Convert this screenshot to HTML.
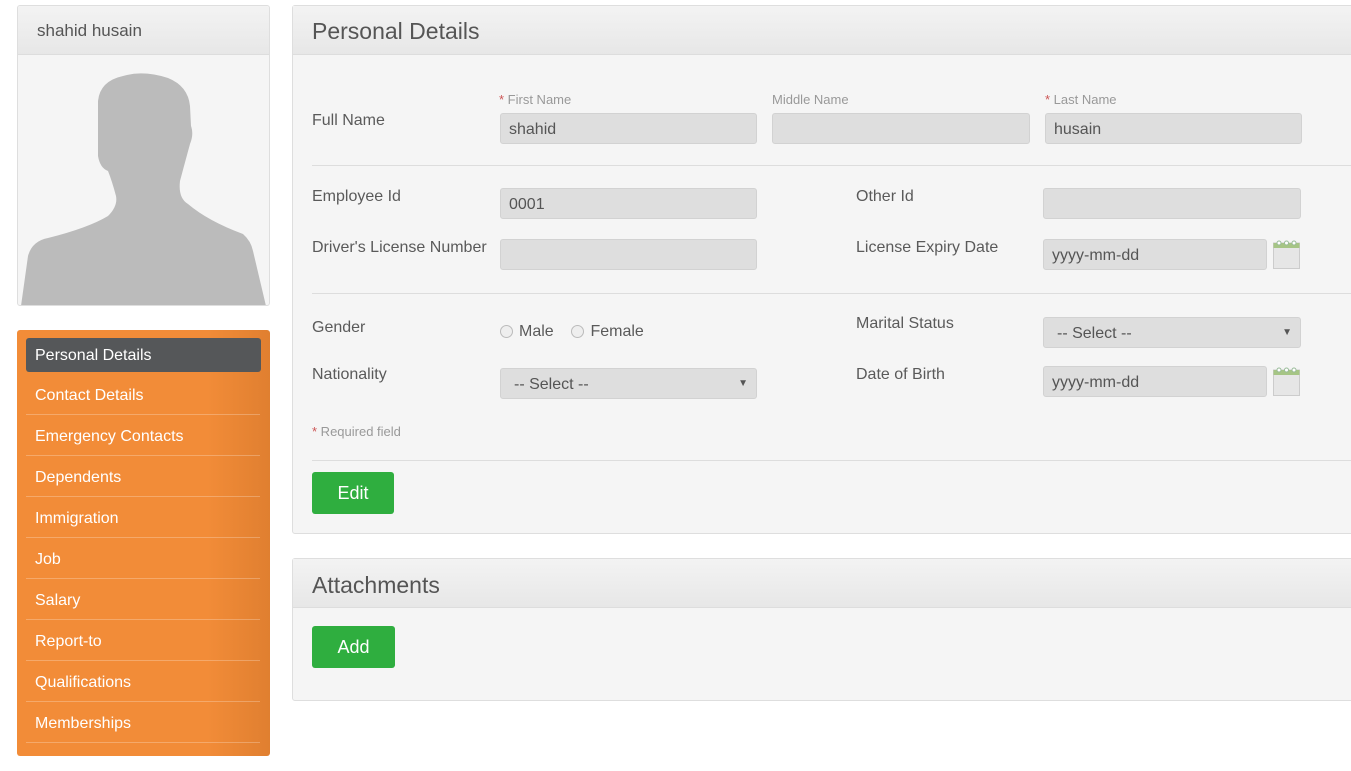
<!DOCTYPE html><html><head><style>
body{margin:0;width:1351px;height:771px;background:#fff;font-family:"Liberation Sans",sans-serif;position:relative;overflow:hidden;color:#5a5a5a}
.a{position:absolute}
.box{position:absolute;background:#f5f5f5;border:1px solid #dedede;border-radius:3px}
.hd{position:absolute;left:0;right:0;top:0;height:48px;background:linear-gradient(#f3f3f3,#e7e7e7);border-bottom:1px solid #ddd}
.in{position:absolute;background:#dedede;border:1px solid #d2d2d2;border-radius:3px;box-sizing:border-box;height:31px;font-size:16px;color:#555;padding:7px 8px}
.lb{position:absolute;font-size:16px;color:#5a5a5a}
.sm{position:absolute;font-size:13px;color:#999}
.hr{position:absolute;left:312px;right:0;height:1px;background:#ddd}
.btn{position:absolute;background:#2fae3f;color:#fff;font-size:18px;border-radius:3px;text-align:center;line-height:42px}
.menu div{position:absolute;left:26px;width:234px;height:40px;color:#fff;font-size:16px;line-height:42px;padding-left:9px;box-sizing:border-box;border-bottom:1px solid rgba(255,255,255,.25)}
.cal{position:absolute;width:27px;height:29px}
.rad{display:inline-block;width:13px;height:13px;border:1px solid #bbb;border-radius:50%;background:#eee;vertical-align:-2px;margin-right:6px;box-sizing:border-box}
.sel:after{content:"▼";position:absolute;right:8px;top:9px;font-size:10px;color:#555}
</style></head><body>
<div class="box" style="left:17px;top:5px;width:251px;height:299px;overflow:hidden">
<div class="hd"></div><div class="a" style="left:19px;top:15px;font-size:17px;color:#555">shahid husain</div>
<svg class="a" style="left:0;top:50px" width="251" height="250" viewBox="0 0 251 250"><path fill="#bbb" d="M3 250 L10 200 Q14 185 30 182 Q70 172 90 160 Q100 150 98 140 Q94 125 90 115 Q82 112 80 100 L80 45 Q82 25 105 20 Q125 14 150 22 Q170 30 172 50 L173 70 Q176 78 172 88 Q166 110 162 125 Q160 142 170 148 Q190 165 225 178 Q233 185 235 195 L248 250Z"/></svg>
</div>
<div class="a menu" style="left:17px;top:330px;width:253px;height:426px;border-radius:3px;background:linear-gradient(90deg,#f28c38 75%,#e07f30)">
<div style="left:9px;top:8px;height:34px;line-height:36px;background:#555759;border-radius:3px;border:none;width:235px">Personal Details</div>
<div style="left:9px;top:45px">Contact Details</div><div style="left:9px;top:86px">Emergency Contacts</div><div style="left:9px;top:127px">Dependents</div><div style="left:9px;top:168px">Immigration</div><div style="left:9px;top:209px">Job</div><div style="left:9px;top:250px">Salary</div><div style="left:9px;top:291px">Report-to</div><div style="left:9px;top:332px">Qualifications</div><div style="left:9px;top:373px">Memberships</div>
</div>
<div class="box" style="left:292px;top:5px;width:1070px;height:527px"><div class="hd"></div><div class="a" style="left:19px;top:12px;font-size:23px;color:#555">Personal Details</div></div>
<div class="box" style="left:292px;top:558px;width:1070px;height:141px"><div class="hd"></div><div class="a" style="left:19px;top:13px;font-size:23px;color:#555">Attachments</div></div>
<div class="lb" style="left:312px;top:112px">Full Name</div>
<div class="sm" style="left:499px;top:92px"><span style="color:#c55">*</span> First Name</div>
<div class="sm" style="left:772px;top:92px">Middle Name</div>
<div class="sm" style="left:1045px;top:92px"><span style="color:#c55">*</span> Last Name</div>
<div class="in" style="left:500px;top:113px;width:257px">shahid</div>
<div class="in" style="left:772px;top:113px;width:258px"></div>
<div class="in" style="left:1045px;top:113px;width:257px">husain</div>
<div class="hr" style="top:165px"></div>
<div class="lb" style="left:312px;top:188px">Employee Id</div>
<div class="in" style="left:500px;top:188px;width:257px">0001</div>
<div class="lb" style="left:856px;top:188px">Other Id</div>
<div class="in" style="left:1043px;top:188px;width:258px"></div>
<div class="lb" style="left:312px;top:239px">Driver's License Number</div>
<div class="in" style="left:500px;top:239px;width:257px"></div>
<div class="lb" style="left:856px;top:239px">License Expiry Date</div>
<div class="in" style="left:1043px;top:239px;width:224px">yyyy-mm-dd</div>
<svg class="cal" style="left:1273px;top:240px" viewBox="0 0 27 29"><rect x="0.5" y="3" width="26" height="25.5" fill="#e6e6e6" stroke="#ccc"/><rect x="0.5" y="3" width="26" height="5" fill="#a6c585"/><circle cx="6" cy="3" r="2" fill="#fff" stroke="#9b9"/><circle cx="13.5" cy="3" r="2" fill="#fff" stroke="#9b9"/><circle cx="21" cy="3" r="2" fill="#fff" stroke="#9b9"/></svg>
<div class="hr" style="top:293px"></div>
<div class="lb" style="left:312px;top:319px">Gender</div>
<div class="lb" style="left:500px;top:323px"><span class="rad"></span>Male &nbsp; &nbsp;<span class="rad"></span>Female</div>
<div class="lb" style="left:856px;top:315px">Marital Status</div>
<div class="in sel" style="left:1043px;top:317px;width:258px;padding-left:13px">-- Select --</div>
<div class="lb" style="left:312px;top:366px">Nationality</div>
<div class="in sel" style="left:500px;top:368px;width:257px;padding-left:13px">-- Select --</div>
<div class="lb" style="left:856px;top:366px">Date of Birth</div>
<div class="in" style="left:1043px;top:366px;width:224px">yyyy-mm-dd</div>
<svg class="cal" style="left:1273px;top:367px" viewBox="0 0 27 29"><rect x="0.5" y="3" width="26" height="25.5" fill="#e6e6e6" stroke="#ccc"/><rect x="0.5" y="3" width="26" height="5" fill="#a6c585"/><circle cx="6" cy="3" r="2" fill="#fff" stroke="#9b9"/><circle cx="13.5" cy="3" r="2" fill="#fff" stroke="#9b9"/><circle cx="21" cy="3" r="2" fill="#fff" stroke="#9b9"/></svg>
<div class="sm" style="left:312px;top:424px"><span style="color:#c55">*</span> Required field</div>
<div class="hr" style="top:460px"></div>
<div class="btn" style="left:312px;top:472px;width:82px">Edit</div>
<div class="btn" style="left:312px;top:626px;width:83px">Add</div>
</body></html>
